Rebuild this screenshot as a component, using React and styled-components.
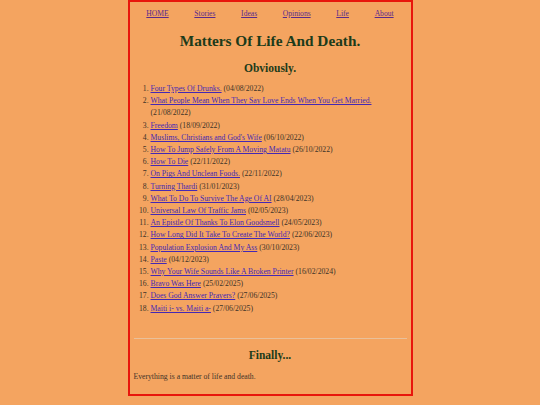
import React from "react";
import styled, { createGlobalStyle } from "styled-components";

const GlobalStyle = createGlobalStyle`
	body {
		margin: 0;
		background: #f4a460;
		font-family: "Liberation Serif", "Times New Roman", serif;
		color: #3d3328;
	}
`;

const Page = styled.div`
	box-sizing: border-box;
	width: 285px;
	height: 396px;
	margin: 0 auto;
	padding: 0 4px;
	border: 2px solid #e8160c;
	display: flex;
	flex-direction: column;
`;

const Nav = styled.nav`
	display: flex;
	justify-content: space-around;
	margin-top: 7px;
	font-size: 7.6px;
	line-height: 10px;
`;

const NavLink = styled.a`
	color: #5a2a8c;
	text-decoration: underline;
`;

const Title = styled.h1`
	margin: 12px 0 0;
	text-align: center;
	font-size: 15.3px;
	line-height: 20px;
	color: #1c3b1a;
`;

const Subtitle = styled.h2`
	margin: ${(p) => p.$top}px 0 0;
	text-align: center;
	font-size: 11.5px;
	line-height: 16px;
	color: #1c3b1a;
`;

const List = styled.ol`
	margin: 7px 0 0;
	padding-left: 17px;
	font-size: 7.7px;
	line-height: 12.2px;
`;

const Item = styled.li``;

const PostLink = styled.a`
	color: #4428b4;
	text-decoration: underline;
`;

const Rule = styled.hr`
	margin: 23px 0 0;
	border: none;
	border-top: 1px solid #e9c09a;
`;

const Text = styled.p`
	margin: 8px 0 0;
	font-size: 7.7px;
	line-height: 11px;
`;

const links = ["HOME", "Stories", "Ideas", "Opinions", "Life", "About"];

const posts = [
	["Four Types Of Drunks.", "04/08/2022"],
	["What People Mean When They Say Love Ends When You Get Married.", "21/08/2022"],
	["Freedom", "18/09/2022"],
	["Muslims, Christians and God's Wife", "06/10/2022"],
	["How To Jump Safely From A Moving Matatu", "26/10/2022"],
	["How To Die", "22/11/2022"],
	["On Pigs And Unclean Foods.", "22/11/2022"],
	["Turning Thardi", "31/01/2023"],
	["What To Do To Survive The Age Of AI", "28/04/2023"],
	["Universal Law Of Traffic Jams", "02/05/2023"],
	["An Epistle Of Thanks To Elon Goodsmell", "24/05/2023"],
	["How Long Did It Take To Create The World?", "22/06/2023"],
	["Population Explosion And My Ass", "30/10/2023"],
	["Paste", "04/12/2023"],
	["Why Your Wife Sounds Like A Broken Printer", "16/02/2024"],
	["Bravo Was Here", "25/02/2025"],
	["Does God Answer Prayers?", "27/06/2025"],
	["Maiti i- vs. Maiti a-", "27/06/2025"],
];

const App = () => {
	return (
		<>
			<GlobalStyle />
			<Page>
				<Nav>
					{links.map((l) => (
						<NavLink key={l} href="#">
							{l}
						</NavLink>
					))}
				</Nav>
				<Title>Matters Of Life And Death.</Title>
				<Subtitle $top={9}>Obviously.</Subtitle>
				<List>
					{posts.map(([title, date]) => (
						<Item key={title}>
							<PostLink href="#">{title}</PostLink> ({date})
						</Item>
					))}
				</List>
				<Rule />
				<Subtitle $top={8}>Finally...</Subtitle>
				<Text>Everything is a matter of life and death.</Text>
			</Page>
		</>
	);
};

export default App;
